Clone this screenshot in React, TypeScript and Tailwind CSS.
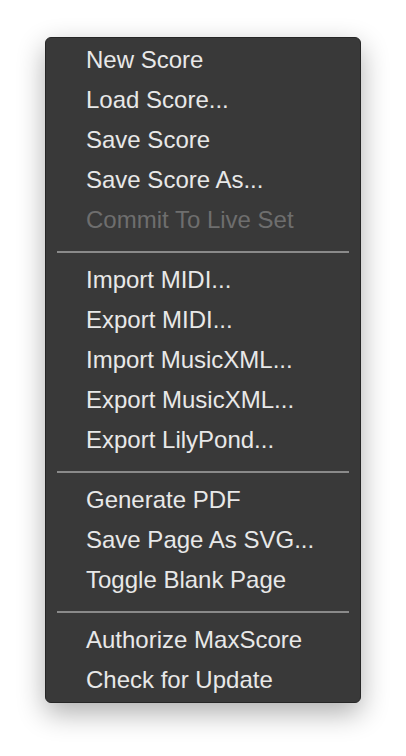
const groups: { label: string; disabled?: boolean }[][] = [
  [
    { label: "New Score" },
    { label: "Load Score..." },
    { label: "Save Score" },
    { label: "Save Score As..." },
    { label: "Commit To Live Set", disabled: true },
  ],
  [
    { label: "Import MIDI..." },
    { label: "Export MIDI..." },
    { label: "Import MusicXML..." },
    { label: "Export MusicXML..." },
    { label: "Export LilyPond..." },
  ],
  [{ label: "Generate PDF" }, { label: "Save Page As SVG..." }, { label: "Toggle Blank Page" }],
  [{ label: "Authorize MaxScore" }, { label: "Check for Update" }],
];

export default function App() {
  return (
    <div className="w-[406px] h-[756px] bg-white overflow-hidden pt-[37px] pl-[45px]">
      <div
        className="w-[316px] bg-[#393939] border border-[#262626] rounded-[6px] py-[2px] shadow-[0_10px_28px_rgba(0,0,0,0.32)]"
        style={{ fontFamily: '"Liberation Sans", Arial, sans-serif' }}
      >
        {groups.map((group, gi) => (
          <div key={gi}>
            {gi > 0 && (
              <div className="h-5 px-[11px]">
                <div className="h-[11px]" />
                <div className="h-[2px] bg-[#8a8a8a]" />
              </div>
            )}
            {group.map((item) => (
              <div
                key={item.label}
                className={`h-10 pl-[40px] text-[24px] leading-[40px] whitespace-nowrap ${
                  item.disabled ? "text-[#6e6e6e]" : "text-[#e8e8e8]"
                }`}
              >
                {item.label}
              </div>
            ))}
          </div>
        ))}
      </div>
    </div>
  );
}
